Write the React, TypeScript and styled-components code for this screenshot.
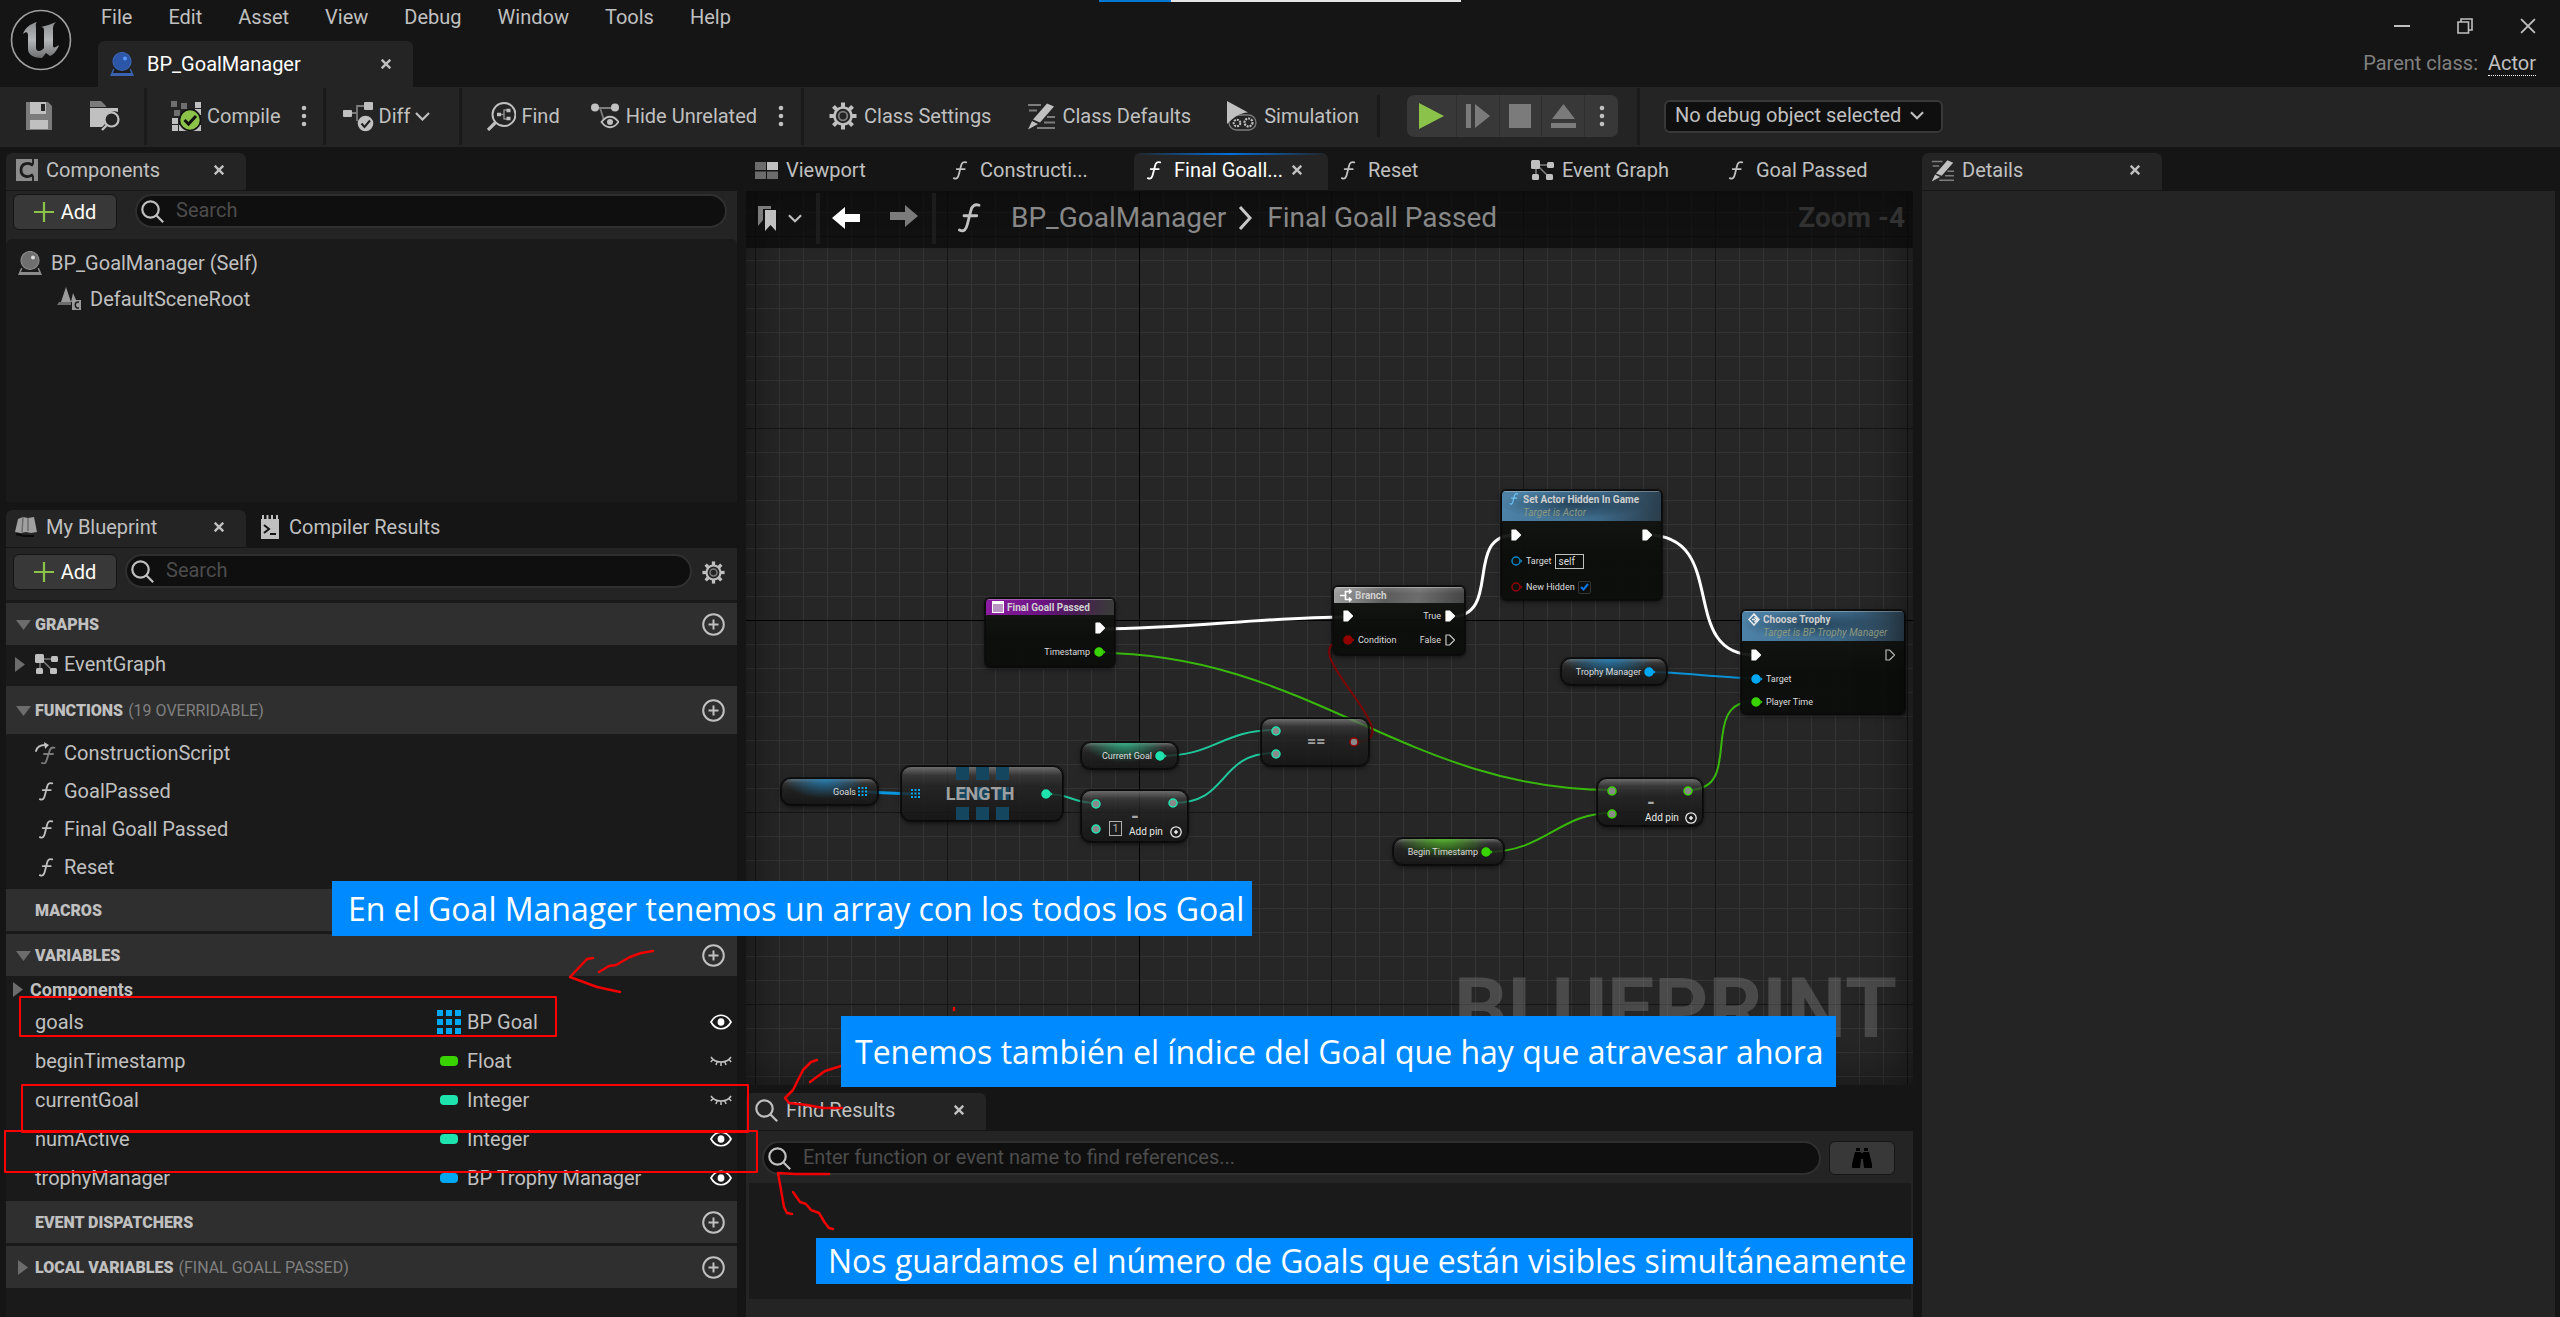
import React from "react";
import styled, { createGlobalStyle, css } from "styled-components";

const c = {
  ink: "#c0c0c0",
  bright: "#ffffff",
  dim: "#808080",
  page: "#151515",
  panel: "#242424",
  recess: "#1a1a1a",
  header: "#2f2f2f",
  field: "#0f0f0f",
  line: "#383838",
  green: "#8bc24a",
  blue: "#00a8f4",
  float: "#39d400",
  int: "#1fe3af",
  bool: "#930000",
  note: "#008aff",
};

const Global = createGlobalStyle`
  *, *::before, *::after { box-sizing: border-box; }
  body { margin: 0; background: ${c.page}; color: ${c.ink}; font: 20px/24px Roboto, "Liberation Sans", sans-serif; }
  button, input, select { font: inherit; color: inherit; }
  button { display: inline-flex; align-items: center; border: 0; padding: 0; background: none; white-space: nowrap; }
  svg { display: block; flex: none; }
`;

/* ---------- shell ---------- */

const Page = styled.div`
  position: relative;
  min-height: 100vh;
  display: flex;
  flex-direction: column;
  overflow: hidden;
`;

const Header = styled.header`
  position: relative;
  display: flex;
  height: 87px;
`;

const LoadStrip = styled.div`
  position: absolute;
  top: 0;
  left: 1099px;
  width: 362px;
  height: 2px;
  background: linear-gradient(90deg, #0078d4 72px, #e5e5e5 72px);
`;

const LogoBox = styled.div`
  width: 98px;
  padding: 9px 0 0 10px;
`;

const TitleStack = styled.div`
  flex: 1;
  display: flex;
  flex-direction: column;
  justify-content: space-between;
  align-items: flex-start;
`;

const Menu = styled.nav`
  display: flex;
  gap: 36px;
  padding: 5px 3px 0;
`;

const AssetTab = styled.div`
  display: flex;
  align-items: center;
  width: 315px;
  height: 46px;
  padding: 0 22px 1px 12px;
  gap: 13px;
  border-radius: 6px 6px 0 0;
  background: ${c.panel};
  color: ${c.bright};
  button { margin-left: auto; color: ${c.ink}; }
`;

const WindowSide = styled.div`
  display: flex;
  flex-direction: column;
  align-items: flex-end;
  gap: 15px;
  padding: 16px 24px 0 0;
`;

const WindowButtons = styled.div`
  display: flex;
  align-items: center;
  gap: 47px;
  height: 20px;
`;

const ParentClass = styled.p`
  margin: 0;
  color: ${c.dim};
  a { color: ${c.ink}; text-decoration: none; border-bottom: 1px dotted #fff; margin-left: 5px; }
`;

const Toolbar = styled.div`
  display: flex;
  align-items: center;
  height: 60px;
  padding-bottom: 2px;
  background: ${c.panel};
`;

const ToolGroup = styled.div<{ $l: number; $r: number; $gap: number; $short?: boolean }>`
  display: flex;
  align-items: center;
  height: ${(p) => (p.$short ? 42 : 57)}px;
  gap: ${(p) => p.$gap}px;
  padding: 0 ${(p) => p.$r}px 0 ${(p) => p.$l}px;
  border-right: 3px solid ${c.recess};
`;

const Tool = styled.button<{ $loose?: boolean }>`
  gap: ${(p) => (p.$loose ? 7 : 5)}px;
`;

const PlayBar = styled.div`
  display: flex;
  width: 211px;
  height: 42px;
  border-radius: 7px;
  background: #383838;
  overflow: hidden;
  button { flex: 1; justify-content: center; border-right: 1px solid #2f2f2f; }
  button:first-child { flex: 1 0 8px; }
  button:last-child { border: 0; flex: 0 0 33px; }
`;

const DebugPick = styled.label`
  display: flex;
  align-items: center;
  gap: 8px;
  height: 33px;
  margin-left: 24px;
  padding: 0 17px 2px 9px;
  border: 2px solid ${c.line};
  border-radius: 6px;
  background: ${c.field};
  select { appearance: none; border: 0; padding: 0; background: none; outline: none; }
`;

const Workspace = styled.main`
  flex: 1;
  display: grid;
  grid-template-columns: 731px minmax(0, 1fr) 633px;
  gap: 9px;
  padding: 6px 5px 0 6px;
`;

const Column = styled.section`
  display: flex;
  flex-direction: column;
  min-width: 0;
`;

/* ---------- dock tabs ---------- */

const TabRow = styled.div`
  display: flex;
  height: 38px;
  padding-bottom: 1px;
`;

const DockTab = styled.div<{ $on?: boolean; $w: number; $accent?: boolean }>`
  display: flex;
  align-items: center;
  width: ${(p) => p.$w}px;
  padding: 0 ${(p) => (p.$accent ? 26 : 22)}px 3px 8px;
  gap: 7px;
  border-radius: 6px 6px 0 0;
  white-space: nowrap;
  background: ${(p) => (p.$on ? c.panel : "none")};
  color: ${(p) => (p.$accent ? c.bright : c.ink)};
  ${(p) =>
    p.$accent &&
    css`
      background: linear-gradient(90deg, transparent, #0070e0 50%, transparent) top / 100% 2px no-repeat, ${c.panel};
    `}
  > button:last-child:not(:first-child) { margin-left: auto; color: ${c.ink}; }
`;

const TabIcon = styled.span`
  display: flex;
  justify-content: center;
  width: 25px;
`;

const Panel = styled.div<{ $h?: number }>`
  display: flex;
  flex-direction: column;
  ${(p) => (p.$h ? `height: ${p.$h}px;` : "flex: 1;")}
  background: ${c.panel};
`;

const PanelTools = styled.div<{ $h: number; $gap: number; $r: number; $t: number }>`
  display: flex;
  align-items: flex-start;
  gap: ${(p) => p.$gap}px;
  height: ${(p) => p.$h}px;
  padding: ${(p) => p.$t}px ${(p) => p.$r}px 0 7px;
`;

const AddButton = styled.button`
  justify-content: center;
  gap: 7px;
  width: 104px;
  height: 36px;
  border: 1px solid #151515;
  border-radius: 6px;
  background: #383838;
  color: ${c.bright};
`;

const SearchBox = styled.label`
  flex: 1;
  display: flex;
  align-items: center;
  gap: 12px;
  height: 34px;
  padding-left: 4px;
  border: 2px solid #2f2f2f;
  border-radius: 17px;
  background: ${c.field};
  input { flex: 1; min-width: 0; height: 24px; margin-bottom: 3px; border: 0; padding: 0; background: none; outline: none; }
  input::placeholder { color: #4c4c4c; opacity: 1; }
`;

const Recess = styled.div`
  flex: 1;
  background: ${c.recess};
`;

const Tree = styled.ul`
  flex: 1;
  margin: 0;
  padding: 6px 0 0;
  list-style: none;
  background: ${c.recess};
  border-radius: 6px 6px 0 0;
`;

const TreeRow = styled.li<{ $in: number }>`
  display: flex;
  align-items: center;
  gap: 9px;
  height: 36px;
  padding-left: ${(p) => p.$in}px;
`;

/* ---------- my blueprint ---------- */

const SectionHead = styled.h2<{ $tall?: boolean }>`
  display: flex;
  align-items: center;
  height: ${(p) => (p.$tall ? 48 : 42)}px;
  margin: 3px 0 0;
  padding: 1px 12px 0 7px;
  background: ${c.header};
  font-size: 16px;
  font-weight: 700;
  span { margin-left: 5px; color: ${c.dim}; font-weight: 400; }
  button { margin-left: auto; }
`;

const Twist = styled.button<{ $w?: number }>`
  justify-content: center;
  width: ${(p) => p.$w ?? 20}px;
  && { margin: 0; }
`;

const SectionTitle = styled.b`
  margin-left: 2px;
`;

const List = styled.ul`
  margin: 0;
  padding: 0;
  list-style: none;
`;

const Item = styled.li<{ $h: number; $bold?: boolean }>`
  display: flex;
  align-items: center;
  gap: 6px;
  height: ${(p) => p.$h}px;
  padding-left: 5px;
  ${(p) => p.$bold && "font-size: 18px; font-weight: 700;"}
`;

const FnItem = styled(Item)`
  padding-left: 29px;
`;

const VarItem = styled.li`
  display: grid;
  grid-template-columns: 402px 1fr 22px;
  align-items: center;
  height: 39px;
  padding: 0 5px 1px 29px;
`;

const VarType = styled.span`
  display: flex;
  align-items: center;
  gap: 6px;
  > span { display: flex; justify-content: center; width: 24px; }
`;

const Pill = styled.i<{ $c: string }>`
  width: 18px;
  height: 10px;
  border-radius: 4px;
  background: ${(p) => p.$c};
`;

/* ---------- graph ---------- */

const Graph = styled.div`
  position: relative;
  flex: 1;
  overflow: hidden;
  background:
    linear-gradient(#000 0 0) 393px 0 / 1px 100% no-repeat,
    linear-gradient(#000 0 0) 0 429px / 100% 1px no-repeat,
    linear-gradient(90deg, #151515 1px, transparent 1px) 9px 0 / 192px 192px,
    linear-gradient(#151515 1px, transparent 1px) 0 45px / 192px 192px,
    linear-gradient(90deg, #343434 1px, transparent 1px) 9px 0 / 24px 24px,
    linear-gradient(#343434 1px, transparent 1px) 0 21px / 24px 24px,
    #262626;
  &::after { content: ""; position: absolute; inset: 0; pointer-events: none; box-shadow: inset 0 0 50px rgba(0, 0, 0, 0.5); }
`;

const GraphBar = styled.div`
  position: relative;
  z-index: 1;
  display: flex;
  align-items: center;
  height: 57px;
  padding: 0 8px 3px 12px;
  background: rgba(8, 8, 8, 0.7);
  font-size: 28px;
  line-height: 34px;
  color: #888;
  strong { margin-left: auto; color: #313131; }
`;

const BarRule = styled.i<{ $l: number; $r: number }>`
  width: 4px;
  height: 51px;
  margin: 0 ${(p) => p.$r}px 0 ${(p) => p.$l}px;
  background: #1c1c1c;
`;

const Crumb = styled.span<{ $l: number }>`
  margin-left: ${(p) => p.$l}px;
`;

const Watermark = styled.div`
  position: absolute;
  right: 16px;
  bottom: 24px;
  font-size: 84px;
  line-height: 104px;
  font-weight: 700;
  color: rgba(120, 120, 120, 0.45);
`;

const Wires = styled.svg`
  position: absolute;
  left: 0;
  top: 0;
  width: 100%;
  height: 100%;
  fill: none;
  stroke-width: 2;
`;

const NodeBox = styled.article<{ $x: number; $y: number; $w: number; $h: number }>`
  position: absolute;
  left: ${(p) => p.$x}px;
  top: ${(p) => p.$y}px;
  width: ${(p) => p.$w}px;
  height: ${(p) => p.$h}px;
  overflow: hidden;
  border-radius: 5px;
  border: 1px solid #0a0a0a;
  background: linear-gradient(rgba(22, 24, 22, 0.92), rgba(11, 13, 10, 0.95) 60%);
  box-shadow: 0 0 0 1px rgba(8, 8, 8, 0.7), 0 2px 5px rgba(0, 0, 0, 0.6);
  color: #dcdcdc;
  font-size: 9px;
  line-height: 12px;
`;

const heads = {
  event: "linear-gradient(100deg, #8d1ca4, #6a1280 45%, #4a1d56 70%, #3a3a3a 95%)",
  func: "radial-gradient(ellipse at 45% 45%, rgba(20,40,55,.6), transparent 60%), linear-gradient(100deg, #4e83a8, #3d6a8a 60%, #2a3c4a)",
  flow: "linear-gradient(rgba(255,255,255,.15), transparent 40%), linear-gradient(100deg, #a0a0a0, #5c5c5c 40%, #6d6d6d 65%, #444)",
};

const NodeHead = styled.header<{ $k: keyof typeof heads; $h: number; $gap: number }>`
  display: flex;
  gap: ${(p) => p.$gap}px;
  height: ${(p) => p.$h}px;
  padding: 2px 6px 0;
  background: ${(p) => heads[p.$k]};
  box-shadow: inset 0 1px 0 rgba(255, 255, 255, 0.3);
  h3 { margin: 0; font-size: 10px; line-height: 13px; font-weight: 700; color: #d0d0d0; }
  p { margin: 0; font-size: 10px; line-height: 14px; font-style: italic; color: #8b987f; white-space: nowrap; }
`;

const PinRows = styled.div`
  padding-top: 1px;
`;

const PinRow = styled.div<{ $h: number }>`
  display: flex;
  align-items: center;
  justify-content: space-between;
  height: ${(p) => p.$h}px;
  padding: 0 8px;
  > span { display: flex; align-items: center; gap: 3px; }
`;

const SelfBox = styled.output`
  border: 1px solid #c0c0c0;
  padding: 0 8px 0 3px;
  line-height: 13px;
  font-size: 10px;
`;

const Check = styled.span`
  display: inline-grid;
  input { grid-area: 1 / 1; appearance: none; width: 13px; height: 13px; margin: 0; border: 1px solid #333; border-radius: 2px; background: #0f0f0f; }
  svg { grid-area: 1 / 1; place-self: center; pointer-events: none; }
`;

const Compact = styled(NodeBox)<{ $glow?: string }>`
  display: flex;
  border-radius: 10px;
  background:
    ${(p) => (p.$glow ? `radial-gradient(ellipse at 45% 0, ${p.$glow}, transparent 55%),` : "")}
    linear-gradient(rgba(130, 130, 130, 0.75), rgba(60, 60, 60, 0.7) 16%, rgba(34, 35, 34, 0.8) 38%, rgba(20, 21, 20, 0.85));
`;

const VarNode = styled(Compact)`
  align-items: center;
  justify-content: flex-end;
  gap: 2px;
  padding: 0 10px 0 0;
`;

const InPins = styled.div<{ $row: number }>`
  display: flex;
  flex-direction: column;
  width: 45px;
  padding: 0 0 0 8px;
  > span { display: flex; align-items: center; gap: 6px; height: ${(p) => p.$row}px; }
`;

const OutSide = styled.div`
  flex: 1;
  display: flex;
  flex-direction: column;
`;

const OutTop = styled.div<{ $h: number }>`
  display: flex;
  justify-content: space-between;
  height: ${(p) => p.$h}px;
  padding: 6px 7px 0 4px;
  b { align-self: flex-end; font-size: 20px; line-height: 18px; color: #a8a8a8; }
`;

const AddPin = styled.button`
  && { justify-content: space-between; padding: 0 5px 0 2px; font-size: 10px; line-height: 14px; color: #e8e8e8; }
`;

const LiteralBox = styled.input`
  && { width: 13px; height: 15px; padding: 0; border: 1px solid #b0b0b0; background: none; text-align: center; font-size: 11px; line-height: 13px; color: #b0b0b0; }
`;

const NodeGlyph = styled.b<{ $s: number }>`
  position: relative;
  font-size: ${(p) => p.$s}px;
  line-height: 24px;
  color: #a0a0a0;
`;

const Spread = styled(Compact)<{ $p: number }>`
  align-items: center;
  justify-content: space-between;
  padding: 0 ${(p) => p.$p}px;
  > * { position: relative; }
  > svg:first-child { position: absolute; left: 54px; top: 0; }
`;

const EqualSide = styled.div`
  flex: 1;
  display: flex;
  align-items: center;
  justify-content: space-between;
  padding-right: 7px;
`;

/* ---------- find results ---------- */

const FindArea = styled.div`
  display: flex;
  flex-direction: column;
  height: 186px;
  padding: 0 2px 18px 3px;
  background: ${c.panel};
`;

const FindRow = styled.div`
  display: flex;
  gap: 8px;
  height: 52px;
  padding: 10px 16px 0 13px;
`;

const FindAll = styled(AddButton)`
  width: 66px;
  height: 34px;
`;

/* ---------- notes over the window ---------- */

const Note = styled.p<{ $x: number; $y: number; $w: number; $h: number; $l: number }>`
  position: absolute;
  left: ${(p) => p.$x}px;
  top: ${(p) => p.$y}px;
  width: ${(p) => p.$w}px;
  height: ${(p) => p.$h}px;
  margin: 0;
  padding-left: ${(p) => p.$l}px;
  background: ${c.note};
  color: #fff;
  font: 32px/${(p) => p.$h}px "Open Sans", "Noto Sans", sans-serif;
  white-space: nowrap;
`;

const Marks = styled.svg`
  position: absolute;
  left: 0;
  top: 0;
  pointer-events: none;
  fill: none;
  stroke: #f00;
  stroke-width: 2;
  stroke-linejoin: round;
  stroke-linecap: round;
`;

/* ---------- icons ---------- */

const Logo = () => (
  <svg width="62" height="62" viewBox="10 9 62 62">
    <defs>
      <linearGradient id="steel" x1="0" y1="0" x2="0" y2="1">
        <stop offset="0" stopColor="#8a8c8e" />
        <stop offset="0.5" stopColor="#b4b6b8" />
        <stop offset="1" stopColor="#6c6e70" />
      </linearGradient>
    </defs>
    <circle cx="41" cy="40" r="29.5" fill="#101010" stroke="#a0a0a0" strokeWidth="1.6" />
    <path
      fill="url(#steel)"
      d="M23 34C25 28 30 24 37 22C35 24 36 26 36 28V47C36 50 37 51 39 51C41 51 43 49 44 48V30C44 28 43 27 41 27C46 26 51 24 56 22C53 25 53 27 53 30V46C53 48 55 48 59 45C57 51 53 55 50 56L46 53L42 58C34 58 28 55 28 49V35C28 32 26 31 23 34Z"
    />
  </svg>
);

const Cross = ({ s = 10, w = 2.4 }: { s?: number; w?: number }) => (
  <svg width={s} height={s} viewBox="0 0 10 10" stroke="currentColor" strokeWidth={(w * 10) / s}>
    <path d="M.7.7l8.600 8.600M9.300.7L.7 9.300" />
  </svg>
);

const Orb = ({ a, b, shine }: { a: string; b: string; shine: string }) => (
  <svg width="24" height="24" viewBox="0 0 24 24">
    <path fill={b} d="M3 17l4 1v2h10v-2l4-1 3 7H0z" />
    <path fill="#1c1c1c" d="M5 16l-2 5h18l-2-5z" />
    <circle cx="12" cy="9.500" r="9" fill={a} stroke={b} strokeWidth="1.200" />
    <circle cx="15" cy="6.500" r="2" fill={shine} />
  </svg>
);

const Fx = ({ s = 20, color = "currentColor" }: { s?: number; color?: string }) => (
  <svg width={s} height={s} viewBox="0 0 20 20" fill="none" stroke={color} strokeWidth="1.900" strokeLinecap="round">
    <path d="M3 18c3 1.500 4.500-.5 5.300-4L10.600 5c.8-3.300 2.800-4.500 5.400-3.500M6 8.500h8.500" />
  </svg>
);

const Dots = () => (
  <svg width="6" height="22" viewBox="0 0 6 22" fill="currentColor">
    <circle cx="3" cy="3" r="2.300" />
    <circle cx="3" cy="11" r="2.300" />
    <circle cx="3" cy="19" r="2.300" />
  </svg>
);

const Chevron = ({ w = 15 }: { w?: number }) => (
  <svg width={w} height="9" viewBox="0 0 15 9" fill="none" stroke="currentColor" strokeWidth="2.200">
    <path d="M1 1l6.500 6.500L14 1" />
  </svg>
);

const Lens = ({ color = "#c0c0c0" }: { color?: string }) => (
  <svg width="23" height="23" viewBox="0 0 23 23" fill="none" stroke={color} strokeWidth="2.200">
    <circle cx="9.500" cy="9.500" r="8.200" />
    <path d="M15.500 15.500l6.700 6.700" />
  </svg>
);

const Plus = () => (
  <svg width="20" height="20" viewBox="0 0 20 20" stroke={c.green} strokeWidth="2.200">
    <path d="M10 0v20M0 10h20" />
  </svg>
);

const Gear = ({ s }: { s: number }) => (
  <svg width={s} height={s} viewBox="0 0 28 28" fill="none" stroke="#c0c0c0">
    <circle cx="14" cy="14" r="8.500" strokeWidth="2.600" />
    <circle cx="14" cy="14" r="4.300" strokeWidth="1.800" stroke="#7d7d7d" />
    {[0, 45, 90, 135, 180, 225, 270, 315].map((d) => (
      <path key={d} d="M14 5V0.500" strokeWidth="4" transform={`rotate(${d} 14 14)`} />
    ))}
  </svg>
);

const CirclePlus = () => (
  <svg width="23" height="23" viewBox="0 0 23 23" fill="none" stroke="#c0c0c0" strokeWidth="2">
    <circle cx="11.500" cy="11.500" r="10.300" />
    <path d="M11.500 6.500v10M6.500 11.500h10" />
  </svg>
);

const GraphIcon = () => (
  <svg width="23" height="21" viewBox="0 0 23 21">
    <path d="M5 5h12M5 5v11M7 6l11 11" stroke="#7d7d7d" strokeWidth="1.500" />
    <g fill="#c0c0c0">
      <rect width="9" height="9" rx="1.500" />
      <rect x="16" y="2" width="7" height="6" rx="1.500" />
      <rect x="1" y="14" width="7" height="6" rx="1.500" />
      <rect x="15" y="14" width="7" height="6" rx="1.500" />
    </g>
  </svg>
);

const PencilIcon = ({ s = 28 }: { s?: number }) => (
  <svg width={s} height={s} viewBox="0 0 28 28">
    <path d="M1 3h13M2 8.500h8M20 15h8M17 20.500h11M10 26h18" stroke="#7d7d7d" strokeWidth="1.800" />
    <path d="M20 1.500l7 3L13 20.500l-7-3zM5 19l6 3-10 5.500z" fill="#c0c0c0" />
  </svg>
);

const Down = () => (
  <svg width="15" height="10" viewBox="0 0 15 10" fill="#6c6c6c"><path d="M0 0h15L7.500 10z" /></svg>
);
const Right = () => (
  <svg width="10" height="15" viewBox="0 0 10 15" fill="#6c6c6c"><path d="M0 0l10 7.500L0 15z" /></svg>
);

const CIcon = ({ s = 22 }: { s?: number }) => (
  <svg width={s} height={s} viewBox="0 0 22 22">
    <path d="M0 0h16v5h2V0h4v22h-4v-5h-2v5H0z" fill="#8c8c8c" />
    <path d="M17 6.500C12 2.500 5 4.500 5 11s7 8.500 12 4.500" fill="none" stroke="#1c1c1c" strokeWidth="2.800" />
  </svg>
);

const SaveIcon = () => (
  <svg width="28" height="28" viewBox="0 0 28 28">
    <path d="M1 0h22l4 4v24H1z" fill="#7b7b7b" />
    <path d="M5 0h16v12H5zM5 18h18v9H5z" fill="#c0c0c0" />
    <path d="M16 2h4v7h-4z" fill="#242424" />
  </svg>
);

const BrowseIcon = () => (
  <svg width="30" height="30" viewBox="0 0 30 30">
    <path d="M0 6V0h11l5 5v1z" fill="#7b7b7b" />
    <path d="M0 7h28v4a10 10 0 0 0-13 12l-3 3H0z" fill="#c0c0c0" />
    <circle cx="21.500" cy="18.500" r="7" fill="#242424" stroke="#c0c0c0" strokeWidth="2.200" />
    <path d="M17 24l-5 5" stroke="#c0c0c0" strokeWidth="2.400" />
  </svg>
);

const CompileIcon = () => (
  <svg width="31" height="31" viewBox="0 0 31 31">
    <path d="M0 0h6v6H0zM10 2h6v6h-6zM3 9h6v6H3z" fill="#6f6f6f" />
    <path d="M24 1h6v6h-6zM1 17h6v6H1zM1 24h6v6H1zM8 24h22v6H8zM24 8h6v6h-6z" fill="#c0c0c0" />
    <circle cx="19" cy="19" r="10.500" fill={c.green} stroke="#151515" strokeWidth="1.600" />
    <path d="M13.500 19l4 4 7.500-8" fill="none" stroke="#101010" strokeWidth="3" />
  </svg>
);

const DiffIcon = () => (
  <svg width="31" height="31" viewBox="0 0 31 31">
    <path d="M8 12h6V5h8M14 12v8" fill="none" stroke="#7b7b7b" strokeWidth="1.800" />
    <rect y="9" width="9" height="7" rx="1" fill="#c0c0c0" />
    <rect x="21" y="1" width="9" height="8" rx="1" fill="#c0c0c0" />
    <circle cx="22.500" cy="22.500" r="7.800" fill="#c0c0c0" />
    <path d="M18.500 22.500l3 3.500 5.500-6.500" fill="none" stroke="#202020" strokeWidth="2" />
  </svg>
);

const FindIcon = () => (
  <svg width="29" height="29" viewBox="0 0 29 29" fill="none" stroke="#c0c0c0">
    <circle cx="17" cy="12.500" r="11.500" strokeWidth="2" />
    <path d="M9 20l-8 8" strokeWidth="3.200" />
    <path d="M17 7.500v10M14 12.500h3M17 8h3M17 17h3" stroke="#8a8a8a" strokeWidth="1.500" />
    <path d="M10 12.500h4M19.500 8.500h4M19.500 16.500h4" strokeWidth="3.500" />
  </svg>
);

const HideIcon = () => (
  <svg width="28" height="26" viewBox="0 0 28 26" fill="none">
    <path d="M4 5h20M9 5l4 12" stroke="#7b7b7b" strokeWidth="1.800" />
    <circle cx="4" cy="4.500" r="4" fill="#c0c0c0" />
    <circle cx="24" cy="4.500" r="4" fill="#c0c0c0" />
    <path d="M10.500 19c5-7 12-7 17 0-5 7-12 7-17 0z" fill="#242424" stroke="#c0c0c0" strokeWidth="1.800" />
    <circle cx="19" cy="19" r="3" fill="#c0c0c0" />
  </svg>
);

const SimIcon = () => (
  <svg width="30" height="30" viewBox="0 0 30 30" fill="none">
    <rect x="2" y="14" width="27" height="15" rx="7.500" fill="#242424" stroke="#7b7b7b" strokeWidth="1.300" />
    <path d="M0 0l21 11.500C13 12 8 15 0 23z" fill="#c0c0c0" />
    <circle cx="10" cy="22" r="3.300" stroke="#c0c0c0" strokeWidth="2" strokeDasharray="2 1" />
    <circle cx="21.500" cy="21.500" r="4" stroke="#c0c0c0" strokeWidth="2.200" strokeDasharray="2 1" />
  </svg>
);

const EyeOpen = () => (
  <svg width="22" height="16" viewBox="0 0 22 16" fill="none" stroke="#fff" strokeWidth="1.700">
    <path d="M1 8c5-9 15-9 20 0-5 9-15 9-20 0z" />
    <ellipse cx="11" cy="8" rx="3.400" ry="3.800" fill="#fff" stroke="none" />
  </svg>
);

const EyeShut = () => (
  <svg width="22" height="11" viewBox="0 0 22 11" fill="none" stroke="#c0c0c0" strokeWidth="1.500">
    <path d="M1 1c4 6.500 16 6.500 20 0M3 3.500L.8 6M7 6l-1 3M11 6.500V10M15 6l1 3M19 3.500L21.200 6" />
  </svg>
);

const Grid9 = ({ s, color, cell }: { s: number; color: string; cell: number }) => {
  const step = (s - cell) / 2;
  return (
    <svg width={s} height={s} viewBox={`0 0 ${s} ${s}`} fill={color}>
      {[0, 1, 2].flatMap((r) =>
        [0, 1, 2].map((k) => <rect key={`${r}${k}`} x={k * step} y={r * step} width={cell} height={cell} />)
      )}
    </svg>
  );
};

const Pin = ({ color, ring, grey }: { color: string; ring?: boolean; grey?: boolean }) => (
  <svg width="13" height="12" viewBox="0 0 13 12">
    {!grey && <path d="M10.500 4l2 2-2 2z" fill={color} />}
    <circle cx="6" cy="6" r="4" fill={grey ? "#8a8a8a" : ring ? "#101210" : color} stroke={color} strokeWidth="1.500" />
  </svg>
);

const Exec = ({ hollow }: { hollow?: boolean }) => (
  <svg width="12" height="12" viewBox="0 0 12 12">
    <path
      d="M2 1h3.500l5 5-5 5H2z"
      fill={hollow ? "none" : "#fff"}
      stroke={hollow ? "#c8c8c8" : "#fff"}
      strokeWidth="1.200"
      strokeLinejoin="round"
    />
  </svg>
);

const PinAdd = () => (
  <svg width="12" height="12" viewBox="0 0 12 12" fill="none" stroke="#e8e8e8">
    <circle cx="6" cy="6" r="5.200" strokeWidth="1.300" />
    <path d="M6 4v4M4 6h4" strokeWidth="1.600" />
  </svg>
);

/* ---------- parts ---------- */

const Close = ({ label }: { label: string }) => (
  <button aria-label={`Close ${label}`}>
    <Cross />
  </button>
);

const Section = ({ title, extra, twist, add = true, tall }: { title: string; extra?: string; twist?: "down" | "right"; add?: boolean; tall?: boolean }) => (
  <SectionHead $tall={tall}>
    <Twist aria-label={`Toggle ${title}`}>{twist === "down" ? <Down /> : twist === "right" ? <Right /> : null}</Twist>
    <SectionTitle>{title}</SectionTitle>
    {extra && <span>{extra}</span>}
    {add && (
      <button aria-label={`Add to ${title}`}>
        <CirclePlus />
      </button>
    )}
  </SectionHead>
);

const variables = [
  { name: "goals", type: "BP Goal", color: c.blue, array: true, open: true },
  { name: "beginTimestamp", type: "Float", color: c.float, open: false },
  { name: "currentGoal", type: "Integer", color: c.int, open: false },
  { name: "numActive", type: "Integer", color: c.int, open: true },
  { name: "trophyManager", type: "BP Trophy Manager", color: c.blue, open: true },
];

const graphTabs = [
  { label: "Viewport", icon: "view" },
  { label: "Constructi...", icon: "fx" },
  { label: "Final Goall...", icon: "fx", on: true },
  { label: "Reset", icon: "fx" },
  { label: "Event Graph", icon: "graph" },
  { label: "Goal Passed", icon: "fx" },
];

const ViewIcon = () => (
  <svg width="23" height="17" viewBox="0 0 23 17" fill="#6c6c6c">
    <path d="M0 0h11v8H0zM0 9.500h11V17H0zM12 9.500h11V17H12z" />
    <path d="M12 0h11v8H12z" fill="#c0c0c0" />
  </svg>
);

const tabIcon = (k: string) => (k === "view" ? <ViewIcon /> : k === "graph" ? <GraphIcon /> : <Fx s={19} />);

const GraphNodes = () => (
  <>
    <Wires>
      <g stroke="#fff" strokeWidth="3">
        <path d="M354 438C440 438 520 426 601 426" />
        <path d="M704 426C758 426 716 344 769 344" />
        <path d="M901 344C985 344 930 464 1009 464" />
      </g>
      <g stroke="#37b80b">
        <path d="M352 462C560 462 660 599 866 599" />
        <path d="M740 661C800 661 812 622 866 622" />
        <path d="M943 599C1000 599 950 510 1009 510" />
      </g>
      <g stroke="#1fc79b">
        <path d="M414 565C470 565 475 539 530 539" />
        <path d="M427 612C485 612 470 562 530 562" />
        <path d="M301 603C325 603 326 612 350 612" />
      </g>
      <path stroke="#7d0505" d="M601 450C536 450 674 551 608 551" />
      <path stroke="#0a98e0" strokeWidth="3" d="M120 601L165 603" />
      <path stroke="#0a90d4" d="M903 481C940 481 970 487 1009 487" />
    </Wires>

    <NodeBox $x={239} $y={407} $w={130} $h={69}>
      <NodeHead $k="event" $h={16} $gap={3}>
        <svg width="12" height="12" viewBox="0 0 12 12"><path d="M0 0h12v12H0z" fill="#fff" /><path d="M1 3h10v8H1z" fill="#b995c4" /></svg>
        <h3>Final Goall Passed</h3>
      </NodeHead>
      <PinRows>
        <PinRow $h={24}><i /><Exec /></PinRow>
        <PinRow $h={24}><i /><span>Timestamp <Pin color={c.float} /></span></PinRow>
      </PinRows>
    </NodeBox>

    <NodeBox $x={587} $y={395} $w={132} $h={69}>
      <NodeHead $k="flow" $h={16} $gap={3}>
        <svg width="12" height="13" viewBox="0 0 12 13" fill="none" stroke="#fff" strokeWidth="1.700"><path d="M0 6.500h5M11 2.500H5.500v8H11M9 .5l2 2-2 2M9 8.500l2 2-2 2" /></svg>
        <h3>Branch</h3>
      </NodeHead>
      <PinRows>
        <PinRow $h={24}><Exec /><span>True <Exec /></span></PinRow>
        <PinRow $h={24}><span><Pin color={c.bool} /> Condition</span><span>False <Exec hollow /></span></PinRow>
      </PinRows>
    </NodeBox>

    <NodeBox $x={755} $y={299} $w={161} $h={110}>
      <NodeHead $k="func" $h={30} $gap={3}>
        <Fx s={12} color="#6fc3f5" />
        <div><h3>Set Actor Hidden In Game</h3><p>Target is Actor</p></div>
      </NodeHead>
      <PinRows>
        <PinRow $h={26}><Exec /><Exec /></PinRow>
        <PinRow $h={26}><span><Pin color="#0a84c6" ring /> Target <SelfBox>self</SelfBox></span></PinRow>
        <PinRow $h={26}>
          <span>
            <Pin color={c.bool} ring /> <label htmlFor="new-hidden">New Hidden</label>
            <Check>
              <input id="new-hidden" type="checkbox" defaultChecked />
              <svg width="9" height="8" viewBox="0 0 9 8" fill="none" stroke="#0a78e6" strokeWidth="2"><path d="M1 4l2.500 2.500L8 1" /></svg>
            </Check>
          </span>
        </PinRow>
      </PinRows>
    </NodeBox>

    <NodeBox $x={995} $y={419} $w={164} $h={104}>
      <NodeHead $k="func" $h={30} $gap={3}>
        <svg width="12" height="13" viewBox="0 0 12 13" fill="none" stroke="#e8e8e8" strokeWidth="1.500"><path d="M6 1l5 5.500-5 5.500-5-5.500zM4 6.500h3M6.500 4l2.500 2.500L6.500 9" /></svg>
        <div><h3>Choose Trophy</h3><p>Target is BP Trophy Manager</p></div>
      </NodeHead>
      <PinRows>
        <PinRow $h={26}><Exec /><Exec hollow /></PinRow>
        <PinRow $h={22}><span><Pin color={c.blue} /> Target</span></PinRow>
        <PinRow $h={23}><span><Pin color={c.float} /> Player Time</span></PinRow>
      </PinRows>
    </NodeBox>

    <VarNode $x={35} $y={587} $w={97} $h={27} $glow="rgba(30,130,190,.8)">Goals <Grid9 s={9} cell={2} color={c.blue} /></VarNode>
    <VarNode $x={335} $y={551} $w={97} $h={27} $glow="rgba(40,190,140,.75)">Current Goal <Pin color={c.int} /></VarNode>
    <VarNode $x={815} $y={467} $w={106} $h={27} $glow="rgba(30,130,190,.8)">Trophy Manager <Pin color={c.blue} /></VarNode>
    <VarNode $x={647} $y={647} $w={111} $h={27} $glow="rgba(80,200,30,.75)">Begin Timestamp <Pin color={c.float} /></VarNode>

    <Spread $x={155} $y={575} $w={162} $h={55} $p={9}>
      <Grid9 s={53} cell={13} color="#14475f" />
      <Grid9 s={9} cell={2} color={c.blue} />
      <NodeGlyph $s={18}>LENGTH</NodeGlyph>
      <Pin color={c.int} />
    </Spread>

    <Compact $x={335} $y={599} $w={107} $h={52}>
      <InPins $row={25}>
        <span><Pin color={c.int} grey /></span>
        <span><Pin color={c.int} grey /><LiteralBox aria-label="Subtrahend" defaultValue="1" /></span>
      </InPins>
      <OutSide>
        <OutTop $h={34}><b>-</b><Pin color={c.int} grey /></OutTop>
        <AddPin>Add pin <PinAdd /></AddPin>
      </OutSide>
    </Compact>

    <Compact $x={851} $y={587} $w={106} $h={48}>
      <InPins $row={23}>
        <span><Pin color={c.float} grey /></span>
        <span><Pin color={c.float} grey /></span>
      </InPins>
      <OutSide>
        <OutTop $h={32}><b>-</b><Pin color={c.float} grey /></OutTop>
        <AddPin>Add pin <PinAdd /></AddPin>
      </OutSide>
    </Compact>

    <Compact $x={515} $y={527} $w={108} $h={48}>
      <InPins $row={23}>
        <span><Pin color={c.int} grey /></span>
        <span><Pin color={c.int} grey /></span>
      </InPins>
      <EqualSide>
        <NodeGlyph $s={16}>==</NodeGlyph>
        <Pin color={c.bool} grey />
      </EqualSide>
    </Compact>
  </>
);

export default function App() {
  return (
    <Page>
      <Global />
      <Header>
        <LoadStrip />
        <LogoBox><Logo /></LogoBox>
        <TitleStack>
          <Menu>
            {["File", "Edit", "Asset", "View", "Debug", "Window", "Tools", "Help"].map((m) => (
              <button key={m}>{m}</button>
            ))}
          </Menu>
          <AssetTab>
            <Orb a="#2c57a8" b="#3a62b0" shine="#5a98ff" />
            BP_GoalManager
            <Close label="BP_GoalManager" />
          </AssetTab>
        </TitleStack>
        <WindowSide>
          <WindowButtons>
            <button aria-label="Minimize"><svg width="16" height="2"><path d="M0 0h16v2H0z" fill="#c0c0c0" /></svg></button>
            <button aria-label="Restore">
              <svg width="16" height="16" viewBox="0 0 16 16" fill="none" stroke="#c0c0c0" strokeWidth="1.600"><path d="M1 4h10.500v11H1zM4 4V1h11v11h-3" /></svg>
            </button>
            <button aria-label="Close window"><Cross s={16} w={1.8} /></button>
          </WindowButtons>
          <ParentClass>Parent class: <a href="#actor">Actor</a></ParentClass>
        </WindowSide>
      </Header>

      <Toolbar>
        <ToolGroup $l={25} $r={24} $gap={37}>
          <Tool aria-label="Save"><SaveIcon /></Tool>
          <Tool aria-label="Browse"><BrowseIcon /></Tool>
        </ToolGroup>
        <ToolGroup $l={24} $r={16} $gap={20}>
          <Tool><CompileIcon />Compile</Tool>
          <Tool aria-label="Compile options"><Dots /></Tool>
        </ToolGroup>
        <ToolGroup $l={17} $r={29} $gap={0}>
          <Tool><DiffIcon />Diff<Chevron /></Tool>
        </ToolGroup>
        <ToolGroup $l={25} $r={17} $gap={31}>
          <Tool><FindIcon />Find</Tool>
          <ToolPair>
            <Tool $loose><HideIcon />Hide Unrelated</Tool>
            <Tool aria-label="Hide options"><Dots /></Tool>
          </ToolPair>
        </ToolGroup>
        <ToolGroup $l={25} $r={18} $gap={36} $short>
          <Tool $loose><Gear s={28} />Class Settings</Tool>
          <Tool $loose><PencilIcon />Class Defaults</Tool>
          <Tool $loose><SimIcon />Simulation</Tool>
        </ToolGroup>
        <ToolGroup $l={27} $r={19} $gap={0}>
          <PlayBar>
            <button aria-label="Play"><svg width="25" height="26" viewBox="0 0 25 26" fill={c.green}><path d="M0 0l25 13L0 26z" /></svg></button>
            <button aria-label="Step"><svg width="24" height="24" viewBox="0 0 24 24" fill="#7b7b7b"><path d="M0 0h5v24H0zM9 0l15 12L9 24z" /></svg></button>
            <button aria-label="Stop"><svg width="22" height="24"><path d="M0 0h22v24H0z" fill="#7b7b7b" /></svg></button>
            <button aria-label="Eject"><svg width="25" height="24" viewBox="0 0 25 24" fill="#7b7b7b"><path d="M12.500 0L24 15H1zM0 19h25v5H0z" /></svg></button>
            <button aria-label="Play options"><Dots /></button>
          </PlayBar>
        </ToolGroup>
        <DebugPick>
          <select aria-label="Debug object"><option>No debug object selected</option></select>
          <Chevron w={14} />
        </DebugPick>
      </Toolbar>

      <Workspace>
        <Column>
          <TabRow>
            <DockTab $on $w={240}><TabIcon><CIcon /></TabIcon>Components<Close label="Components" /></DockTab>
          </TabRow>
          <Panel $h={311}>
            <PanelTools $h={48} $gap={18} $r={10} $t={3}>
              <AddButton><Plus />Add</AddButton>
              <SearchBox><Lens /><input aria-label="Search components" placeholder="Search" /></SearchBox>
            </PanelTools>
            <Tree>
              <TreeRow $in={12}><Orb a="#6f6f6f" b="#8c8c8c" shine="#dadada" />BP_GoalManager (Self)</TreeRow>
              <TreeRow $in={51}>
                <svg width="24" height="24" viewBox="0 0 24 24"><path d="M9 0l5 15H4zM16 6l4 9h-6z" fill="#9a9a9a" /><path d="M2 15h12v3H0z" fill="#6c6c6c" /><path d="M15 13h9v10h-9z" fill="#9a9a9a" /><path d="M22 15c-5-1-5 7 0 6" fill="none" stroke="#1a1a1a" strokeWidth="1.500" /></svg>
                DefaultSceneRoot
              </TreeRow>
            </Tree>
          </Panel>
          <LowerTabs>
            <DockTab $on $w={240}>
              <TabIcon><svg width="23" height="20" viewBox="0 0 23 20"><path d="M3 2l5-2 5 1 6-1 3 15-6 1-5-1-5 1-6-1z" fill="#a0a0a0" /><path d="M8 0l-1 15M13 1v13" stroke="#6c6c6c" strokeWidth="1.500" /><path d="M1 17l8 2h10" stroke="#0a0a0a" strokeWidth="2" fill="none" /></svg></TabIcon>
              My Blueprint<Close label="My Blueprint" />
            </DockTab>
            <DockTab $w={220}>
              <TabIcon><svg width="18" height="24" viewBox="0 0 18 24"><path d="M0 4h18v20H0z" fill="#c0c0c0" /><path d="M2 0v5M6.500 0v5M11 0v5M16 0v5" stroke="#c0c0c0" strokeWidth="2" /><path d="M3 10l5 4-5 4M9 19h6" stroke="#151515" strokeWidth="2" fill="none" /></svg></TabIcon>
              Compiler Results
            </DockTab>
          </LowerTabs>
          <Panel>
            <PanelTools $h={52} $gap={8} $r={12} $t={6}>
              <AddButton><Plus />Add</AddButton>
              <SearchBox><Lens /><input aria-label="Search blueprint" placeholder="Search" /></SearchBox>
              <GearButton aria-label="View options"><Gear s={23} /></GearButton>
            </PanelTools>
            <Recess>
              <Section title="GRAPHS" twist="down" />
              <List>
                <Item $h={38}><Twist $w={18} aria-label="Expand EventGraph"><Right /></Twist><GraphIcon />EventGraph</Item>
              </List>
              <Section title="FUNCTIONS" extra="(19 OVERRIDABLE)" twist="down" tall />
              <List>
                <FnItem $h={38}>
                  <svg width="23" height="22" viewBox="0 0 23 22" fill="none" stroke="#7b7b7b" strokeWidth="1.900" strokeLinecap="round"><path d="M7 21c3 1.500 4-.5 5-4l2.500-8c1-3 2.500-4 5-3.200M9 12h9" /><path d="M1 9c1-4 4-6 9-6" stroke="#c0c0c0" /><path d="M9 0l5 3-4 4z" fill="#c0c0c0" stroke="none" /></svg>
                  ConstructionScript
                </FnItem>
                {["GoalPassed", "Final Goall Passed", "Reset"].map((f) => (
                  <FnItem key={f} $h={38}><TabIcon23><Fx s={19} /></TabIcon23>{f}</FnItem>
                ))}
              </List>
              <Section title="MACROS" add={false} />
              <Section title="VARIABLES" twist="down" />
              <List>
                <Item $h={27} $bold><Twist $w={13} aria-label="Expand Components"><Right /></Twist>Components</Item>
                {variables.map((v) => (
                  <VarItem key={v.name}>
                    {v.name}
                    <VarType><span>{v.array ? <Grid9 s={24} cell={6} color={v.color} /> : <Pill $c={v.color} />}</span>{v.type}</VarType>
                    <button aria-label={`Toggle visibility of ${v.name}`}>{v.open ? <EyeOpen /> : <EyeShut />}</button>
                  </VarItem>
                ))}
              </List>
              <Section title="EVENT DISPATCHERS" />
              <Section title="LOCAL VARIABLES" extra="(FINAL GOALL PASSED)" twist="right" />
            </Recess>
          </Panel>
        </Column>

        <Column>
          <TabRow>
            {graphTabs.map((t) => (
              <DockTab key={t.label} $w={194} $on={t.on} $accent={t.on}>
                <TabIcon>{tabIcon(t.icon)}</TabIcon>
                {t.label}
                {t.on && <Close label={t.label} />}
              </DockTab>
            ))}
          </TabRow>
          <Graph>
            <Watermark>BLUEPRINT</Watermark>
            <GraphNodes />
            <GraphBar>
              <button aria-label="Bookmarks">
                <svg width="18" height="25" viewBox="0 0 18 25"><path d="M0 0h13v3H5v11l-5 6z" fill="#7b7b7b" /><path d="M7 4h11v21l-5.500-6L7 25z" fill="#c0c0c0" /></svg>
              </button>
              <MarkChevron><Chevron w={14} /></MarkChevron>
              <BarRule $l={14} $r={12} />
              <button aria-label="Back"><svg width="28" height="22" viewBox="0 0 28 22" fill="#fff"><path d="M0 11L13 0v7h15v8H13v7z" /></svg></button>
              <Crumb $l={30}>
                <button aria-label="Forward"><svg width="28" height="22" viewBox="0 0 28 22" fill="#7b7b7b"><path d="M28 11L15 0v7H0v8h15v7z" /></svg></button>
              </Crumb>
              <BarRule $l={14} $r={19} />
              <Fx s={30} color="#c0c0c0" />
              <Crumb $l={26}>BP_GoalManager</Crumb>
              <Crumb $l={12}><svg width="15" height="24" viewBox="0 0 15 24" fill="none" stroke="#c8c8c8" strokeWidth="3"><path d="M2 1l10 11L2 23" /></svg></Crumb>
              <Crumb $l={14}>Final Goall Passed</Crumb>
              <strong>Zoom -4</strong>
            </GraphBar>
          </Graph>
          <LowerTabs>
            <DockTab $on $w={240}><TabIcon><Lens /></TabIcon>Find Results<Close label="Find Results" /></DockTab>
          </LowerTabs>
          <FindArea>
            <FindRow>
              <SearchBox><Lens /><input aria-label="Find references" placeholder="Enter function or event name to find references..." /></SearchBox>
              <FindAll aria-label="Find in all blueprints">
                <svg width="20" height="20" viewBox="0 0 20 20"><path d="M4 0h4v3H4zM12 0h4v3h-4zM3 4h6v8l-1 8H0V16zM11 4h6l3 12v4h-8l-1-8zM9 5h2v6H9z" fill="#000" /></svg>
              </FindAll>
            </FindRow>
            <Recess />
          </FindArea>
        </Column>

        <Column>
          <TabRow>
            <DockTab $on $w={240}><TabIcon><PencilIcon s={23} /></TabIcon>Details<Close label="Details" /></DockTab>
          </TabRow>
          <Panel />
        </Column>
      </Workspace>

      <Marks width="1200" height="1317">
        <rect x="20" y="997" width="536" height="39" />
        <rect x="22" y="1085" width="726" height="47" />
        <rect x="5" y="1131" width="752" height="41" />
        <g strokeWidth="2.500" stroke="#e00">
          <path d="M653 951L641 953L630 957L616 965L609 966L599 972M593 958L587 959L570 977L597 987L620 992" />
          <path d="M817 1060L811 1062L803 1070L793 1090L785 1098L789 1103L807 1105L823 1108L842 1108M841 1066L825 1071L810 1082" />
          <path d="M829 1174H795L778 1173L781 1190L784 1207L787 1213L792 1214M793 1192L800 1202L806 1204L811 1210L819 1213L825 1223L829 1228L833 1229" />
          <path d="M954 1008v2" />
        </g>
      </Marks>
      <Note $x={332} $y={881} $w={920} $h={55} $l={16}>En el Goal Manager tenemos un array con los todos los Goal</Note>
      <Note $x={841} $y={1016} $w={995} $h={71} $l={14}>Tenemos también el índice del Goal que hay que atravesar ahora</Note>
      <Note $x={816} $y={1238} $w={1097} $h={46} $l={12}>Nos guardamos el número de Goals que están visibles simultáneamente</Note>
    </Page>
  );
}

const LowerTabs = styled(TabRow)`
  gap: 3px;
  margin-top: 8px;
`;

const ToolPair = styled.div`
  display: flex;
  gap: 21px;
`;

const GearButton = styled.button`
  && { height: 36px; margin-left: 2px; }
`;

const TabIcon23 = styled(TabIcon)`
  width: 23px;
`;

const MarkChevron = styled.span`
  margin-left: 12px;
  color: ${c.ink};
`;
